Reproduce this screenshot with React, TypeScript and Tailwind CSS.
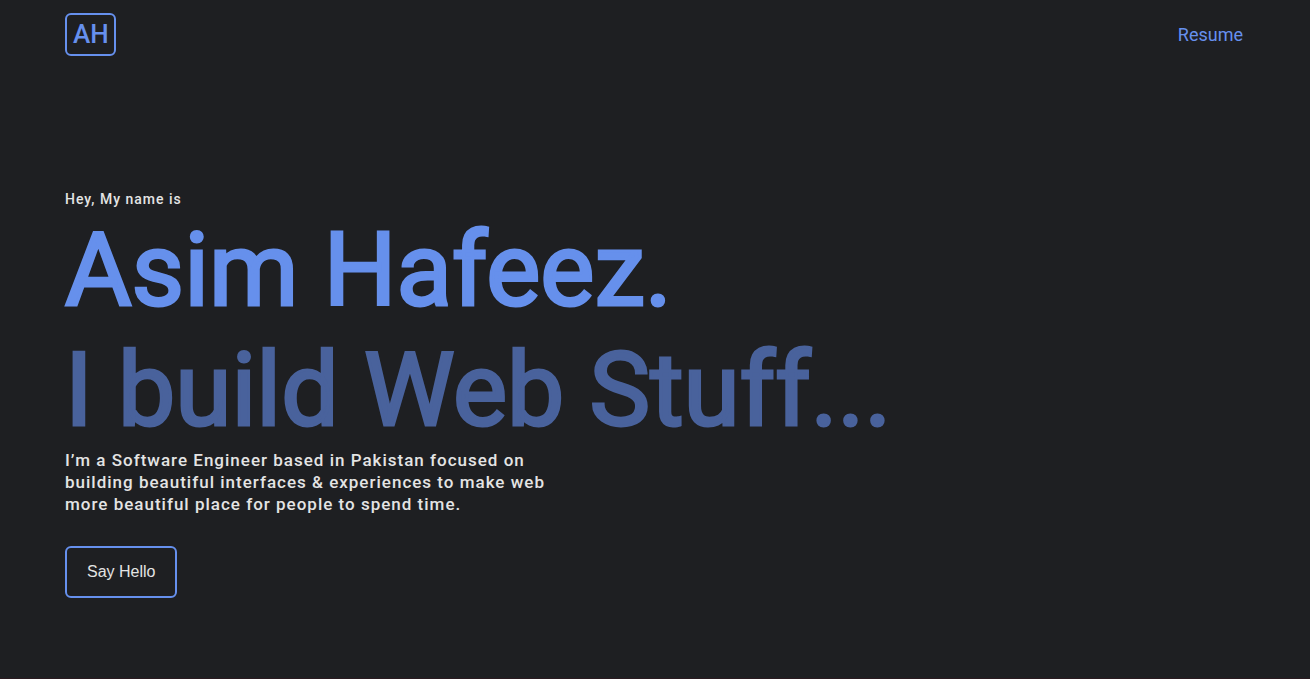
export default function App() {
  return (
    <div className="flex min-h-screen flex-col border-b border-[#2a1a20] bg-[#1e1f22] px-[65px] font-['Roboto',sans-serif] text-[#e4e4e4]">
      <header className="flex items-center justify-between pt-[13px]">
        <a href="#home" className="rounded-md border-2 border-[#6690ee] py-1 pr-[5px] pl-1.5 text-[26px] leading-[31px] font-medium text-[#6690ee]">AH</a>
        <a href="#resume" className="pr-0.5 text-lg text-[#6690ee]">Resume</a>
      </header>
      <main className="flex flex-1 flex-col items-start pt-[133px]">
        <p className="text-sm font-medium tracking-[1px]">Hey, My name is</p>
        <div className="pt-px text-[102px] leading-[120px]">
          <h1 className="font-normal text-[#6690ec] [-webkit-text-stroke:3px_#6690ec]">Asim Hafeez.</h1>
          <h2 className="font-normal text-[#49629c] [-webkit-text-stroke:3px_#49629c]">I build Web Stuff...</h2>
        </div>
        <p className="-mt-px max-w-[500px] text-[17px] leading-[22px] font-medium tracking-[1px]">
          I’m a Software Engineer based in Pakistan focused on building beautiful interfaces &amp; experiences to make web more beautiful place for people to spend time.
        </p>
        <button type="button" className="mt-[31px] rounded-md border-2 border-[#6690ee] px-5 py-3 font-['Liberation_Sans',Arial,sans-serif] text-base">Say Hello</button>
      </main>
    </div>
  );
}
